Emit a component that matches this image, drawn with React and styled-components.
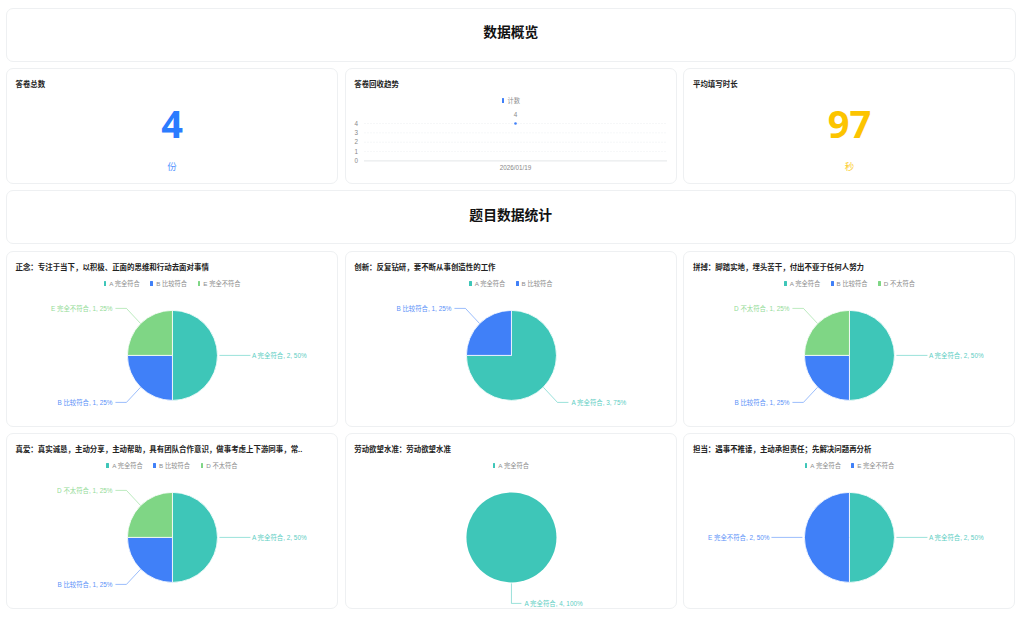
import styled, { createGlobalStyle } from 'styled-components';

const TEAL = '#3ec6b8';
const BLUE = '#4080f8';
const GREEN = '#7fd685';

const GlobalStyle = createGlobalStyle`
  html, body {
    margin: 0;
    padding: 0;
    background: #fff;
  }
  body {
    font-family: "Liberation Sans", "Noto Sans CJK SC", sans-serif;
  }
`;

const Page = styled.div`
  display: flex;
  flex-direction: column;
  gap: 6.7px;
  padding: 7.5px 8.5px 10px 6px;
  box-sizing: border-box;
  width: 1024px;
  height: 620px;
  overflow: hidden;
`;

const Card = styled.section`
  box-sizing: border-box;
  background: #fff;
  border: 1px solid #eef0f2;
  border-radius: 7px;
`;

const Banner = styled(Card)`
  height: 54px;
  padding-bottom: 7px;
  display: flex;
  align-items: center;
  justify-content: center;
  font-size: 13.8px;
  font-weight: 700;
  color: #111;
`;

const Row = styled.div`
  display: grid;
  grid-template-columns: repeat(3, 1fr);
  gap: 6.7px;
`;

const Panel = styled(Card)`
  height: ${props => props.$height}px;
  padding: 9.5px 8.5px 0;
  overflow: hidden;
  display: flex;
  flex-direction: column;
`;

const PanelTitle = styled.h3`
  margin: 0;
  font-size: 7.45px;
  line-height: 11px;
  font-weight: 700;
  color: #222;
  white-space: nowrap;
`;

const BigNumber = styled.div`
  margin-top: 10.5px;
  text-align: center;
  font-family: "Open Sans", "Liberation Sans", sans-serif;
  font-size: 38px;
  line-height: 46px;
  font-weight: 700;
  color: ${props => props.$color};
`;

const Unit = styled.div`
  margin-top: 14.5px;
  text-align: center;
  font-size: 9.5px;
  line-height: 12px;
  color: ${props => props.$color};
  opacity: 0.8;
`;

const Legend = styled.div`
  display: flex;
  justify-content: center;
  gap: 10.5px;
  margin-top: 7px;
  height: 8px;
  align-items: center;
`;

const LegendItem = styled.span`
  display: flex;
  align-items: center;
  gap: 3px;
  font-size: 6.25px;
  line-height: 8px;
  color: #8c8c8c;
  white-space: nowrap;
`;

const Swatch = styled.i`
  display: block;
  width: 2.8px;
  height: 4.6px;
  border-radius: 0.6px;
  background: ${props => props.$color};
`;

const ChartSvg = styled.svg`
  display: block;
  flex: none;
  margin: ${props => props.$top}px -8.5px 0;
  overflow: visible;
`;

const SliceLabel = styled.text`
  font-size: 6.4px;
  fill: ${props => props.$color};
  opacity: 0.85;
`;

const AxisText = styled.text`
  font-size: 6.3px;
  fill: #888;
`;

const W = 331.5;
const R = 45;

function slicePath(cx, cy, from, to) {
  const a0 = (from - 90) * Math.PI / 180;
  const a1 = (to - 90) * Math.PI / 180;
  const large = to - from > 180 ? 1 : 0;
  return `M${cx} ${cy}L${cx + R * Math.cos(a0)} ${cy + R * Math.sin(a0)}A${R} ${R} 0 ${large} 1 ${cx + R * Math.cos(a1)} ${cy + R * Math.sin(a1)}Z`;
}

// leader line + text, offsets are from the pie centre
function Leader({ cx, cy, label, color, place }) {
  const spots = {
    right: { d: [[47, 0], [78, 0]], tx: 79.5, ty: 0, anchor: 'start' },
    left: { d: [[-47, 0], [-78, 0]], tx: -80, ty: 0, anchor: 'end' },
    topLeft: { d: [[-32, -32], [-46, -47], [-57, -47]], tx: -60, ty: -47, anchor: 'end' },
    bottomLeft: { d: [[-32, 32], [-46, 47], [-57, 47]], tx: -60, ty: 47, anchor: 'end' },
    bottomRight: { d: [[32, 32], [46, 47], [57, 47]], tx: 60, ty: 47, anchor: 'start' },
    bottom: { d: [[0, 46], [0, 66], [10, 66]], tx: 13, ty: 66, anchor: 'start' },
  };
  const s = spots[place];
  const points = s.d.map(([x, y]) => `${cx + x},${cy + y}`).join(' ');
  return (
    <g>
      <polyline points={points} fill="none" stroke={color} strokeWidth="0.7" opacity="0.75" />
      <SliceLabel $color={color} x={cx + s.tx} y={cy + s.ty + 2.3} textAnchor={s.anchor}>{label}</SliceLabel>
    </g>
  );
}

function Pie({ slices }) {
  const cx = W / 2 - 0.3;
  const cy = 67.4;
  const total = slices.reduce((sum, s) => sum + s.value, 0);
  let angle = 0;
  return (
    <ChartSvg width={W} height={136} viewBox={`0 0 ${W} 136`} $top={0.5}>
      {slices.map(s => {
        const from = angle;
        angle += s.value / total * 360;
        if (s.value === total) {
          return <circle key={s.name} cx={cx} cy={cy} r={R} fill={s.color} />;
        }
        return <path key={s.name} d={slicePath(cx, cy, from, angle)} fill={s.color} stroke="#fff" strokeWidth="0.8" />;
      })}
      {slices.map(s => (
        <Leader key={s.name} cx={cx} cy={cy} color={s.color} place={s.place}
          label={`${s.name}, ${s.value}, ${Math.round(s.value / total * 100)}%`} />
      ))}
    </ChartSvg>
  );
}

function PieCard({ title, slices, height }) {
  return (
    <Panel $height={height}>
      <PanelTitle>{title}</PanelTitle>
      <Legend>
        {slices.map(s => (
          <LegendItem key={s.name}><Swatch $color={s.color} />{s.name}</LegendItem>
        ))}
      </Legend>
      <Pie slices={slices} />
    </Panel>
  );
}

function TrendChart() {
  const ticks = [4, 3, 2, 1, 0];
  return (
    <ChartSvg width={W} height={72} viewBox="0 0 331.5 72" $top={1.5}>
      {ticks.map((t, i) => {
        const y = 17.5 + i * 9.35;
        return (
          <g key={t}>
            <AxisText x={12} y={y + 2.2} textAnchor="end">{t}</AxisText>
            {t === 0
              ? <line x1="18" x2="321" y1={y} y2={y} stroke="#e4e6e8" strokeWidth="1" />
              : <line x1="18" x2="321" y1={y} y2={y} stroke="#f0f1f3" strokeWidth="0.6" strokeDasharray="2 1" />}
          </g>
        );
      })}
      <circle cx="169.5" cy="17.5" r="1.3" fill={BLUE} />
      <AxisText x="169.5" y="11" textAnchor="middle">4</AxisText>
      <AxisText x="169.5" y="64" textAnchor="middle">2026/01/19</AxisText>
    </ChartSvg>
  );
}

const A = (value, place) => ({ name: 'A 完全符合', value, color: TEAL, place });
const B = (place, color = BLUE) => ({ name: 'B 比较符合', value: 1, color, place });

const firstRow = [
  {
    title: '正念：专注于当下，以积极、正面的思维和行动去面对事情',
    slices: [A(2, 'right'), B('bottomLeft'), { name: 'E 完全不符合', value: 1, color: GREEN, place: 'topLeft' }],
  },
  {
    title: '创新：反复钻研，要不断从事创造性的工作',
    slices: [A(3, 'bottomRight'), B('topLeft')],
  },
  {
    title: '拼搏：脚踏实地，埋头苦干，付出不亚于任何人努力',
    slices: [A(2, 'right'), B('bottomLeft'), { name: 'D 不太符合', value: 1, color: GREEN, place: 'topLeft' }],
  },
];

const secondRow = [
  {
    title: '真爱：真实诚恳，主动分享，主动帮助，具有团队合作意识，做事考虑上下游同事，常..',
    slices: [A(2, 'right'), B('bottomLeft'), { name: 'D 不太符合', value: 1, color: GREEN, place: 'topLeft' }],
  },
  {
    title: '劳动欲望水准：劳动欲望水准',
    slices: [A(4, 'bottom')],
  },
  {
    title: '担当：遇事不推诿，主动承担责任；先解决问题再分析',
    slices: [A(2, 'right'), { name: 'E 完全不符合', value: 2, color: BLUE, place: 'left' }],
  },
];

export default function App() {
  return (
    <>
      <GlobalStyle />
      <Page>
        <Banner>数据概览</Banner>
        <Row>
          <Panel $height={115.5}>
            <PanelTitle>答卷总数</PanelTitle>
            <BigNumber $color="#2b7cff">4</BigNumber>
            <Unit $color="#2b7cff">份</Unit>
          </Panel>
          <Panel $height={115.5}>
            <PanelTitle>答卷回收趋势</PanelTitle>
            <Legend>
              <LegendItem><Swatch $color={BLUE} />计数</LegendItem>
            </Legend>
            <TrendChart />
          </Panel>
          <Panel $height={115.5}>
            <PanelTitle>平均填写时长</PanelTitle>
            <BigNumber $color="#fcc400">97</BigNumber>
            <Unit $color="#fcc400">秒</Unit>
          </Panel>
        </Row>
        <Banner>题目数据统计</Banner>
        <Row>
          {firstRow.map(card => <PieCard key={card.title} {...card} height={175.5} />)}
        </Row>
        <Row>
          {secondRow.map(card => <PieCard key={card.title} {...card} height={176} />)}
        </Row>
      </Page>
    </>
  );
}
